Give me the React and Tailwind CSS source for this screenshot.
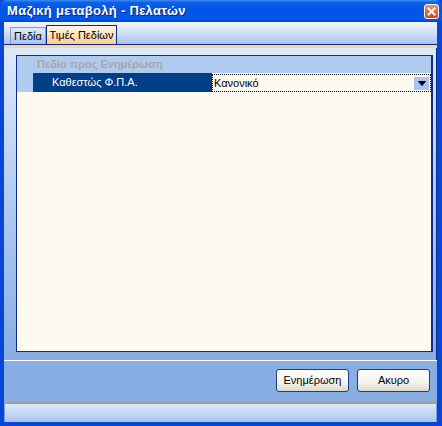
export default function App() {
    return (
        <div className="w-[442px] h-[426px] flex flex-col bg-[#0846d8] font-['Liberation_Sans',sans-serif] text-[11px] text-black select-none">
            {/* Title bar */}
            <div className="h-[22px] shrink-0 flex items-center justify-between pl-[7px] pr-[3px] rounded-t-[6px] bg-[linear-gradient(#3d8bf7_0%,#0b5fe9_12%,#0054e3_45%,#0359ee_85%,#0243cf_100%)]">
                <span className="text-white font-bold text-[13px] tracking-[0.3px] [text-shadow:1px_1px_0_#0a1f82]">Μαζική μεταβολή - Πελατών</span>
                <div className="w-[15px] h-[15px] rounded-[3px] border border-white bg-[linear-gradient(#f08d6e,#d9431c)] flex items-center justify-center">
                    <svg width="9" height="9" viewBox="0 0 9 9">
                        <path d="M1.5 1.5 L7.5 7.5 M7.5 1.5 L1.5 7.5" stroke="white" strokeWidth="2" strokeLinecap="square" />
                    </svg>
                </div>
            </div>

            {/* Window body */}
            <div className="flex-1 min-h-0 flex flex-col ml-[4px] mr-[5px] mb-[4px]">
                {/* Tab strip */}
                <div className="h-[23px] shrink-0 flex items-end pl-[6px] border-b border-[#0b2a8a] bg-[linear-gradient(#f3f6fd,#c9daf5_60%,#a9c3ee)]">
                    <div className="w-[36px] h-[17px] flex items-center justify-center border border-b-0 border-[#7f9ccf]">Πεδία</div>
                    <div className="w-[71px] h-[19px] flex items-center justify-center border border-b-0 border-[#0b2a8a] bg-[linear-gradient(#fff6e6,#fcce92)]">Τιμές Πεδίων</div>
                </div>
                <div className="h-[3px] shrink-0 bg-[#fcd49c]" />

                {/* Panel */}
                <div className="flex-1 min-h-0 flex flex-col bg-[linear-gradient(#dde9fc,#b5cdf2_45%,#87ade3)] border-r border-[#0b2a8a]">
                    <div className="flex-1 flex flex-col mt-[7px] ml-[12px] mr-[3px] mb-[8px] bg-[#fefaef] border border-r-2 border-[#0a2c96]">
                        <div className="h-[17px] shrink-0 pl-[20px] flex items-center bg-[#afcbf0] text-[#a6a6a6] font-bold">Πεδία προς Ενημέρωση</div>
                        <div className="h-[19px] shrink-0 flex">
                            <div className="w-[16px] bg-[#afcbf0]" />
                            <div className="w-[179px] bg-[#003e87] text-white flex items-center pl-[19px]">Καθεστώς Φ.Π.Α.</div>
                            <div className="flex-1 flex items-center justify-between border border-dotted border-black pl-[1px] pr-[1px] mt-[1px]">
                                <span>Κανονικό</span>
                                <div className="w-[15px] h-[13px] bg-[#a9c3f4] flex items-center justify-center">
                                    <svg width="8" height="5" viewBox="0 0 8 5">
                                        <path d="M0.5 0.5 H7.5 L4 4.5 Z" fill="black" stroke="black" strokeWidth="1" />
                                    </svg>
                                </div>
                            </div>
                        </div>
                    </div>
                </div>

                {/* Button bar */}
                <div className="h-[41px] shrink-0 flex items-center justify-end gap-[8px] pr-[7px] pb-[1px] border-t border-white bg-[#88aee3]">
                    <button className="w-[73px] h-[23px] rounded-[3px] border border-[#18407c] bg-[linear-gradient(#ffffff,#f4f3ee_60%,#dcdad0)] text-[11px]">Ενημέρωση</button>
                    <button className="w-[73px] h-[23px] rounded-[3px] border border-[#18407c] bg-[linear-gradient(#ffffff,#f4f3ee_60%,#dcdad0)] text-[11px]">Ακυρο</button>
                </div>
                <div className="h-[2px] shrink-0 bg-[#a5a59c]" />

                {/* Status bar */}
                <div className="h-[19px] shrink-0 border-t border-l border-r border-[#7aa0dc] bg-[linear-gradient(#dce8fb,#c3d7f5_55%,#a8c5ef)]" />
            </div>
        </div>
    );
}
